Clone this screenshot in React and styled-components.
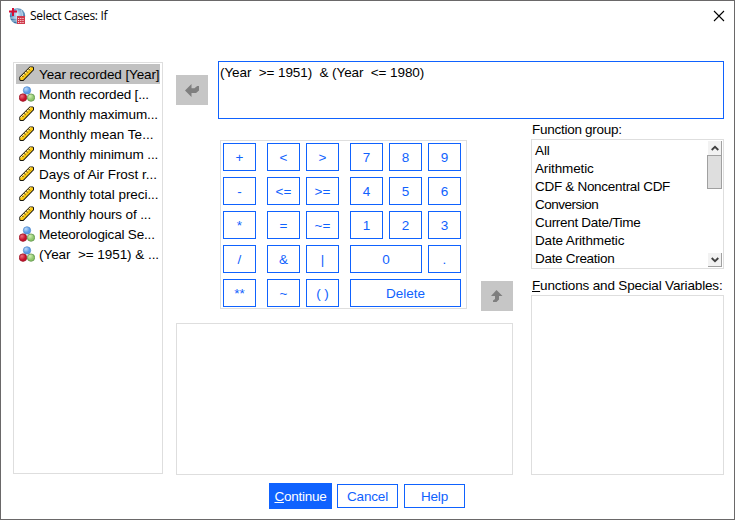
import React from "react";
import styled, { createGlobalStyle, css } from "styled-components";

const BLUE = "#0f62fe";
const LINE = "#dedede";

const GlobalStyle = createGlobalStyle`
  * { box-sizing: border-box; }
  body { margin: 0; background: #fff; }
`;

const Dialog = styled.div`
  width: 735px;
  height: 520px;
  border: 1px solid #6a6869;
  background: #fff;
  color: #000;
  font-family: "Liberation Sans", Arial, sans-serif;
  font-size: 13.5px;
  letter-spacing: -0.08px;
  display: flex;
  flex-direction: column;
  overflow: hidden;
`;

const TitleBar = styled.header`
  height: 30px;
  flex: none;
  display: flex;
  align-items: center;
  padding: 0 9px 0 8px;
`;

const Title = styled.h1`
  flex: 1;
  margin: 0 0 0 4px;
  font: 400 12px/16px "Open Sans", "Noto Sans", sans-serif;
  letter-spacing: -0.32px;
`;

const CloseButton = styled.button`
  width: 12px;
  height: 12px;
  padding: 0;
  border: 0;
  background: none;
  display: flex;
`;

const Body = styled.main`
  display: flex;
  gap: 13px;
  padding: 30px 10px 0 12px;
  height: 444px;
  flex: none;
`;

const VariableList = styled.ul`
  list-style: none;
  margin: 1px 0 0;
  width: 150px;
  height: 412px;
  padding: 1px 2px;
  border: 1px solid ${LINE};
  flex: none;
`;

const VariableItem = styled.li`
  height: 20px;
  display: flex;
  align-items: center;
  gap: 4px;
  padding-left: 3px;
  background: ${(p) => (p.$selected ? "#c1c1c1" : "transparent")};
`;

const Text = styled.span`
  white-space: pre;
  letter-spacing: ${(p) => p.$track || -0.08}px;
`;

const Main = styled.section`
  width: 548px;
  display: flex;
  flex-direction: column;
`;

const ExpressionRow = styled.div`
  display: flex;
  align-items: center;
  gap: 10px;
  height: 58px;
`;

const MoveButton = styled.button`
  width: 32px;
  height: 30px;
  flex: none;
  padding: 0;
  border: 0;
  background: #c6c6c6;
  display: flex;
  align-items: center;
  justify-content: center;
`;

const Expression = styled.div`
  flex: 1;
  height: 58px;
  border: 1px solid ${BLUE};
  padding: 3px 1px;
  line-height: 15px;
`;

const Lower = styled.div`
  display: flex;
  gap: 18px;
`;

const Middle = styled.div`
  width: 337px;
  padding-top: 21px;
`;

const KeypadRow = styled.div`
  display: flex;
  align-items: flex-end;
  gap: 14px;
  height: 171px;
  padding-left: 44px;
`;

const Keypad = styled.div`
  width: 247px;
  height: 169px;
  margin-bottom: 2px;
  padding: 2px;
  border: 1px solid ${LINE};
  display: grid;
  grid-template-columns: 33px 11px 33px 6px 33px 11px 33px 6px 33px 6px 33px;
  grid-auto-rows: 28px;
  row-gap: 6px;
`;

const outlined = css`
  border: 1px solid ${BLUE};
  background: #fff;
  color: ${BLUE};
`;

const Key = styled.button`
  ${outlined}
  grid-column: ${(p) => p.$column} / span ${(p) => p.$span || 1};
  padding: 0;
  font: inherit;
`;

const Panel = styled.div`
  height: ${(p) => p.$height}px;
  margin-top: ${(p) => p.$gap || 0}px;
  border: 1px solid ${LINE};
`;

const Right = styled.div`
  width: 193px;
`;

const FieldLabel = styled.label`
  display: block;
  height: ${(p) => p.$height}px;
  padding: ${(p) => p.$top}px 0 0 1px;
  line-height: 15px;
  white-space: nowrap;
  letter-spacing: ${(p) => p.$track}px;
`;

const GroupList = styled.div`
  height: 130px;
  border: 1px solid ${LINE};
  display: flex;
  justify-content: space-between;
  padding: 1px 1px 1px 3px;
`;

const GroupItems = styled.div`
  padding-top: 1px;
`;

const GroupItem = styled.div`
  height: 18px;
  line-height: 18px;
  letter-spacing: ${(p) => p.$track}px;
`;

const Scrollbar = styled.div`
  width: 15px;
  height: 126px;
  display: flex;
  flex-direction: column;
  align-items: stretch;
  background: #fff;
`;

const ScrollArrow = styled.button`
  height: 14px;
  margin-left: 1px;
  padding: 0;
  border: 0;
  border-right: 1px solid #a0a0a0;
  border-bottom: ${(p) => (p.$down ? "1px solid #a0a0a0" : "0")};
  background: #f2f2f2;
  display: flex;
  align-items: center;
  justify-content: center;
`;

const Thumb = styled.div`
  height: 34px;
  background: #dedede;
  border: 1px solid #a0a0a0;
  margin-bottom: auto;
`;

const Footer = styled.footer`
  display: flex;
  align-items: center;
  height: 26px;
  margin-top: 8px;
  padding-left: 268px;
`;

const Action = styled.button`
  ${outlined}
  width: 61px;
  height: 24px;
  margin-right: 6px;
  padding: 0;
  font: inherit;
  letter-spacing: -0.15px;
  ${(p) =>
    p.$primary &&
    css`
      width: 63px;
      height: 26px;
      margin-right: 5px;
      background: ${BLUE};
      color: #fff;
      letter-spacing: -0.25px;
    `}
`;

const Mnemonic = styled.span`
  text-decoration: underline;
  text-underline-offset: 1px;
  text-decoration-thickness: 1px;
`;

const AppIcon = () => (
  <svg width="17" height="17" viewBox="0 0 17 17">
    <defs>
      <radialGradient id="globe" cx=".5" cy=".4">
        <stop offset="0" stopColor="#d9e9f5" />
        <stop offset=".55" stopColor="#8db4d8" />
        <stop offset="1" stopColor="#3b76a8" />
      </radialGradient>
    </defs>
    <circle cx="8.5" cy="8" r="7.7" fill="url(#globe)" />
    <path d="M1 10h14M8 1v14M2 13h12M12 2c2 4 2 8 0 12" fill="none" stroke="#e4f0f7" strokeWidth=".7" />
    <path d="M4 0v8M0 3.5h8" stroke="#d50e36" strokeWidth="2" />
    <rect x="8" y="8" width="8" height="8" fill="#cf3a4c" />
    <path d="M9 10.5h6M9 12.5h6M9 14.5h6" stroke="#fbd9d8" strokeWidth="1" strokeDasharray="1.2 1" />
  </svg>
);

const RulerIcon = () => (
  <svg width="16" height="16" viewBox="0 0 16 16">
    <path d="M10.8.4h3.1l1.1 1v2.7L4.4 14.9H1.3L.3 14v-3Z" fill="#15130c" />
    <path d="M11.1 1.3h2.4l.5.5v1.9L4 14H1.7l-.5-.5v-2.2Z" fill="#fbc916" />
    <path d="M1.5 11.6 11.5 1.7" stroke="#fff3c4" strokeWidth="1" />
    <path d="m3 9.6 1.3 1.3M5.2 7.4l1.3 1.3M7.4 5.2l1.3 1.3M9.6 3l1.3 1.3" stroke="#15130c" strokeWidth=".9" />
  </svg>
);

const NominalIcon = () => (
  <svg width="16" height="16" viewBox="0 0 16 16">
    <defs>
      <radialGradient id="ballBlue" cx=".35" cy=".3"><stop offset="0" stopColor="#bfdcfa" /><stop offset="1" stopColor="#5c9be4" /></radialGradient>
      <radialGradient id="ballRed" cx=".35" cy=".3"><stop offset="0" stopColor="#ee7080" /><stop offset="1" stopColor="#c4122c" /></radialGradient>
      <radialGradient id="ballGreen" cx=".35" cy=".3"><stop offset="0" stopColor="#d3efb8" /><stop offset="1" stopColor="#8fc86c" /></radialGradient>
    </defs>
    <circle cx="8" cy="4.4" r="3.7" fill="url(#ballBlue)" stroke="#4a86cc" strokeWidth=".7" />
    <circle cx="4" cy="11.6" r="3.8" fill="url(#ballRed)" stroke="#951425" strokeWidth=".7" />
    <circle cx="12" cy="11.6" r="3.7" fill="url(#ballGreen)" stroke="#528a40" strokeWidth=".7" />
  </svg>
);

const ArrowIcon = ({ up }) =>
  up ? (
    <svg width="12" height="12" viewBox="0 0 12 12">
      <path d="M5.5 0 11.5 6H8V9.5L5.5 12H2v-1.5L4 9V6H0Z" fill="#7f7f7f" />
    </svg>
  ) : (
    <svg width="14" height="13" viewBox="0 0 14 13">
      <path d="M0 6.5 6.5 0v4.3h3L12.2 2H14v4.5L11 9H6.5v4Z" fill="#7f7f7f" />
    </svg>
  );

const Chevron = ({ down }) => (
  <svg width="8" height="6" viewBox="0 0 8 6">
    <path d={down ? "m.7 1 3.3 3.2L7.3 1" : "M.7 5 4 1.8 7.3 5"} fill="none" stroke="#404040" strokeWidth="1.8" />
  </svg>
);

const variables = [
  ["scale", "Year recorded [Year]", -0.12],
  ["nominal", "Month recorded [...", -0.18],
  ["scale", "Monthly maximum...", -0.1],
  ["scale", "Monthly mean Te...", 0.04],
  ["scale", "Monthly minimum ...", -0.08],
  ["scale", "Days of Air Frost r...", -0.03],
  ["scale", "Monthly total preci...", -0.06],
  ["scale", "Monthly hours of ...", -0.14],
  ["nominal", "Meteorological Se...", -0.18],
  ["nominal", "(Year  >= 1951) & ...", -0.05],
];

const keys = [
  ["+", 1], ["<", 3], [">", 5], ["7", 7], ["8", 9], ["9", 11],
  ["-", 1], ["<=", 3], [">=", 5], ["4", 7], ["5", 9], ["6", 11],
  ["*", 1], ["=", 3], ["~=", 5], ["1", 7], ["2", 9], ["3", 11],
  ["/", 1], ["&", 3], ["|", 5], ["0", 7, 3], [".", 11],
  ["**", 1], ["~", 3], ["( )", 5], ["Delete", 7, 5],
];

const groups = [
  ["All", -0.1],
  ["Arithmetic", -0.14],
  ["CDF & Noncentral CDF", -0.3],
  ["Conversion", -0.5],
  ["Current Date/Time", -0.3],
  ["Date Arithmetic", -0.15],
  ["Date Creation", -0.3],
];

export default function App() {
  return (
    <>
      <GlobalStyle />
      <Dialog>
        <TitleBar>
          <AppIcon />
          <Title>Select Cases: If</Title>
          <CloseButton aria-label="Close">
            <svg width="12" height="12" viewBox="0 0 12 12">
              <path d="m1 1 10 10M11 1 1 11" stroke="#000" strokeWidth="1.1" />
            </svg>
          </CloseButton>
        </TitleBar>
        <Body>
          <VariableList>
            {variables.map(([kind, label, track], i) => (
              <VariableItem key={label} $selected={i === 0}>
                {kind === "scale" ? <RulerIcon /> : <NominalIcon />}
                <Text $track={track}>{label}</Text>
              </VariableItem>
            ))}
          </VariableList>
          <Main>
            <ExpressionRow>
              <MoveButton aria-label="Insert variable"><ArrowIcon /></MoveButton>
              <Expression><Text>{"(Year  >= 1951)  & (Year  <= 1980)"}</Text></Expression>
            </ExpressionRow>
            <Lower>
              <Middle>
                <KeypadRow>
                  <Keypad>
                    {keys.map(([label, column, span]) => (
                      <Key key={label} $column={column} $span={span}>{label}</Key>
                    ))}
                  </Keypad>
                  <MoveButton aria-label="Insert function"><ArrowIcon up /></MoveButton>
                </KeypadRow>
                <Panel $height={152} $gap={12} />
              </Middle>
              <Right>
                <FieldLabel $height={20} $top={3} $track={-0.27}>Function group:</FieldLabel>
                <GroupList>
                  <GroupItems>
                    {groups.map(([name, track]) => <GroupItem key={name} $track={track}>{name}</GroupItem>)}
                  </GroupItems>
                  <Scrollbar>
                    <ScrollArrow aria-label="Scroll up"><Chevron /></ScrollArrow>
                    <Thumb />
                    <ScrollArrow $down aria-label="Scroll down"><Chevron down /></ScrollArrow>
                  </Scrollbar>
                </GroupList>
                <FieldLabel $height={26} $top={9} $track={-0.16}><Mnemonic>F</Mnemonic>unctions and Special Variables:</FieldLabel>
                <Panel $height={180} />
              </Right>
            </Lower>
          </Main>
        </Body>
        <Footer>
          <Action $primary><Mnemonic>C</Mnemonic>ontinue</Action>
          <Action>Cancel</Action>
          <Action>Help</Action>
        </Footer>
      </Dialog>
    </>
  );
}
